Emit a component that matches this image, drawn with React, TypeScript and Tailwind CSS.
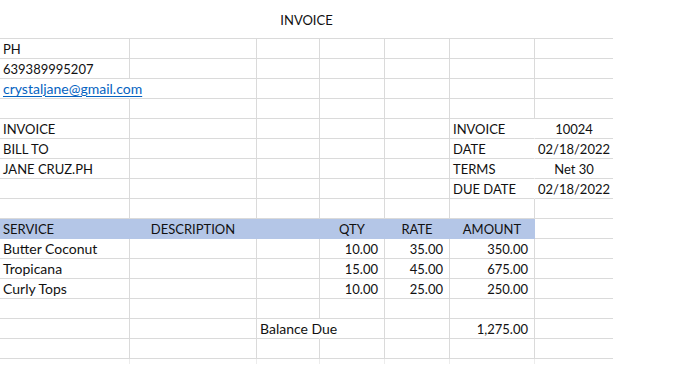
import React from 'react';

type Align = 'left' | 'center' | 'right';

interface CellDef {
  text?: string;
  align?: Align;
  link?: boolean;
  big?: boolean; // mostly lowercase text, set a touch larger
  noRight?: boolean; // text runs over into the next cell, so no gridline
}

// column widths include the right gridline
const COLS = 'grid-cols-[130px_127px_63px_65px_65px_85px_78px]';

const rows: Record<number, CellDef>[] = [
  { 0: { text: 'PH' } },
  { 0: { text: '639389995207' } },
  { 0: { text: 'crystaljane@gmail.com', link: true, big: true, noRight: true } },
  {},
  { 0: { text: 'INVOICE' }, 5: { text: 'INVOICE', noRight: true }, 6: { text: '10024', align: 'center' } },
  { 0: { text: 'BILL TO' }, 5: { text: 'DATE', noRight: true }, 6: { text: '02/18/2022', align: 'center' } },
  { 0: { text: 'JANE CRUZ.PH' }, 5: { text: 'TERMS', noRight: true }, 6: { text: 'Net 30', align: 'center' } },
  { 5: { text: 'DUE DATE', noRight: true }, 6: { text: '02/18/2022', align: 'center' } },
  {},
  // header row handled separately
  {},
  { 0: { text: 'Butter Coconut', big: true }, 3: { text: '10.00', align: 'right' }, 4: { text: '35.00', align: 'right' }, 5: { text: '350.00', align: 'right' } },
  { 0: { text: 'Tropicana', big: true }, 3: { text: '15.00', align: 'right' }, 4: { text: '45.00', align: 'right' }, 5: { text: '675.00', align: 'right' } },
  { 0: { text: 'Curly Tops', big: true }, 3: { text: '10.00', align: 'right' }, 4: { text: '25.00', align: 'right' }, 5: { text: '250.00', align: 'right' } },
  {},
  { 2: { text: 'Balance Due', big: true, noRight: true }, 5: { text: '1,275.00', align: 'right' } },
  {},
];

const header: CellDef[] = [
  { text: 'SERVICE' },
  { text: 'DESCRIPTION', align: 'center' },
  {},
  { text: 'QTY', align: 'center' },
  { text: 'RATE', align: 'center' },
  { text: 'AMOUNT', align: 'center' },
];

const alignClass: Record<Align, string> = {
  left: 'justify-start pl-[3px]',
  center: 'justify-center',
  right: 'justify-end pr-[6px]',
};

function Cell({ def, col, blue }: { def?: CellDef; col: number; blue?: boolean }) {
  const last = col === 6;
  const align = def?.align ?? 'left';
  let border = 'border-b border-[#dadada]';
  if (blue) border = 'border-b border-r border-[#b4c6e7] bg-[#b4c6e7]';
  else if (!last) border += def?.noRight ? ' border-r border-r-transparent' : ' border-r';
  const size = def?.big ? 'text-[14px]' : 'text-[13px]';
  return (
    <div className={`h-[20px] flex items-end pb-[1px] whitespace-nowrap ${size} ${alignClass[align]} ${border}`}>
      {def?.text &&
        (def.link ? (
          <span className="text-[#0563c1] underline underline-offset-2">{def.text}</span>
        ) : (
          <span>{def.text}</span>
        ))}
    </div>
  );
}

export default function App() {
  return (
    <div
      className="w-[683px] h-[384px] bg-white text-[#111] text-[13px] leading-[16px] overflow-hidden"
      style={{ fontFamily: 'Lato, "Liberation Sans", sans-serif' }}
    >
      <div className="w-[613px] h-[38px] flex items-center justify-center pt-[1px]">INVOICE</div>
      <div className={`w-[613px] grid ${COLS} border-t border-[#dadada]`}>
        {rows.map((row, r) =>
          r === 9
            ? [0, 1, 2, 3, 4, 5, 6].map((c) => (
                <Cell key={`${r}-${c}`} def={header[c]} col={c} blue={c < 6} />
              ))
            : [0, 1, 2, 3, 4, 5, 6].map((c) => <Cell key={`${r}-${c}`} def={row[c]} col={c} />)
        )}
        {[0, 1, 2, 3, 4, 5, 6].map((c) => (
          <div key={`tail-${c}`} className={`h-[5px] ${c < 6 ? 'border-r border-[#ececec]' : ''}`} />
        ))}
      </div>
    </div>
  );
}
